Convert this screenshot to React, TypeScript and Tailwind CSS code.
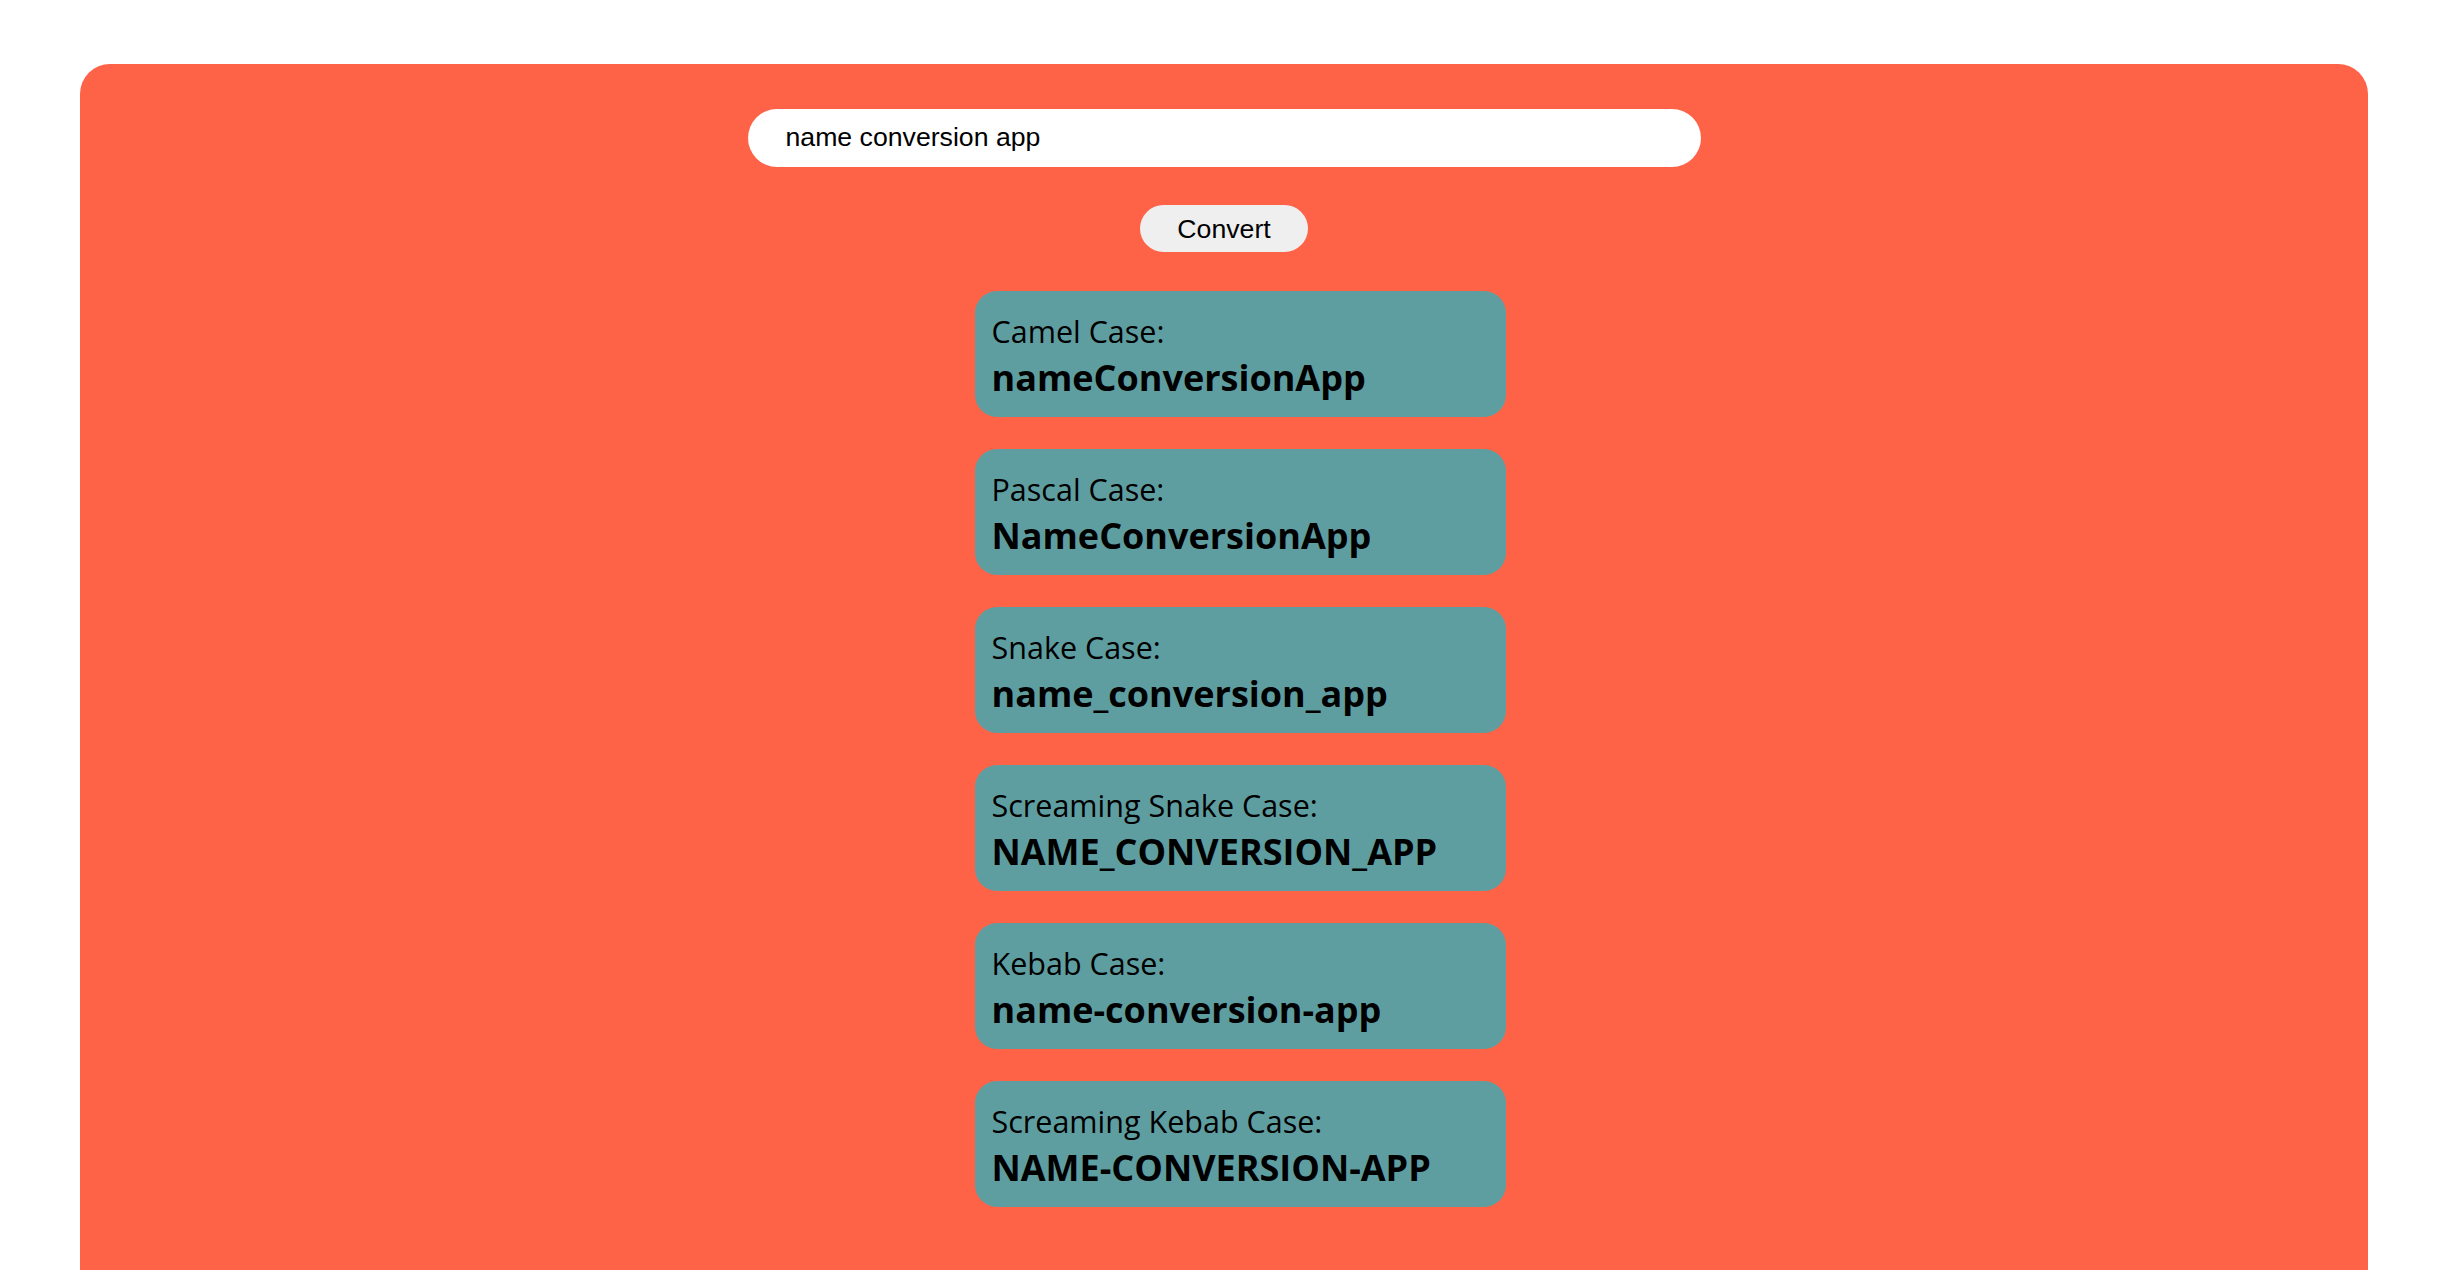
const cases = [
  { label: "Camel Case:", value: "nameConversionApp" },
  { label: "Pascal Case:", value: "NameConversionApp" },
  { label: "Snake Case:", value: "name_conversion_app" },
  { label: "Screaming Snake Case:", value: "NAME_CONVERSION_APP" },
  { label: "Kebab Case:", value: "name-conversion-app" },
  { label: "Screaming Kebab Case:", value: "NAME-CONVERSION-APP" },
];

function ResultCard({ label, value }: { label: string; value: string }) {
  return (
    <div className="w-[531px] h-[126px] rounded-[22px] bg-[#5f9ea0] px-[17px] pt-[23px] text-black font-['Open_Sans',sans-serif]">
      <div className="text-[30.5px] leading-[34px]">{label}</div>
      <div className="mt-[6px] text-[36px] leading-[48px] font-bold">{value}</div>
    </div>
  );
}

export default function App() {
  return (
    <div className="min-h-screen bg-white px-[80px] pt-[64px]">
      <div className="rounded-t-[30px] bg-[#ff6347] pt-[45px] pb-[120px] flex flex-col items-center">
        <input
          type="text"
          defaultValue="name conversion app"
          className="w-[953px] h-[58px] rounded-full bg-white pl-[38px] pb-[2px] text-[26.67px] text-black outline-none font-['Liberation_Sans',Arial,sans-serif]"
        />
        <button className="mt-[38px] w-[168px] h-[47px] rounded-full bg-[#efefef] text-[26.67px] text-black font-['Liberation_Sans',Arial,sans-serif]">
          Convert
        </button>
        <div className="mt-[39px] pl-[32px] flex flex-col gap-[32px]">
          {cases.map((c) => (
            <ResultCard key={c.label} label={c.label} value={c.value} />
          ))}
        </div>
      </div>
    </div>
  );
}
